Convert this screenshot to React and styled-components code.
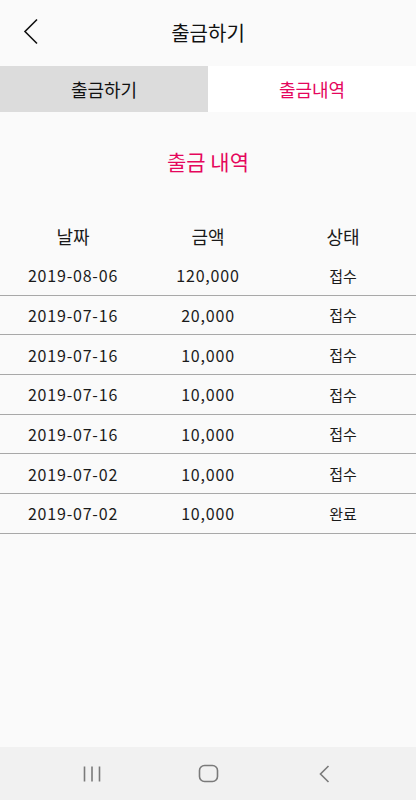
import React from 'react';
import styled, { createGlobalStyle } from 'styled-components';

const GlobalStyle = createGlobalStyle`
  html, body {
    margin: 0;
    padding: 0;
    background: #fafafa;
  }
  body {
    font-family: 'Noto Sans CJK KR', 'Noto Sans', sans-serif;
  }
`

const Screen = styled.div`
  display: flex;
  flex-direction: column;
  width: 416px;
  height: 800px;
  background: #fafafa;
  color: #111111;
`

const Header = styled.header`
  position: relative;
  display: flex;
  align-items: center;
  justify-content: center;
  height: 66px;
`

const BackButton = styled.button`
  position: absolute;
  left: 16px;
  top: 14px;
  width: 30px;
  height: 36px;
  padding: 0;
  border: 0;
  background: none;
  display: flex;
  align-items: center;
  justify-content: center;
`

const Title = styled.h1`
  margin: 0;
  font-size: 20px;
  font-weight: 400;
  line-height: 1;
`

const Tabs = styled.div`
  display: grid;
  grid-template-columns: 1fr 1fr;
  height: 46px;
`

const Tab = styled.div`
  display: flex;
  align-items: center;
  justify-content: center;
  font-size: 18px;
  background: ${props => props.active ? '#ffffff' : '#dcdcdc'};
  color: ${props => props.active ? '#e5065c' : '#111111'};
`

const Body = styled.main`
  flex: 1;
  display: flex;
  flex-direction: column;
`

const SectionTitle = styled.h2`
  margin: 0;
  padding-top: 34px;
  height: 30px;
  line-height: 30px;
  text-align: center;
  font-size: 21px;
  font-weight: 400;
  color: #e5065c;
`

const Table = styled.div`
  margin-top: 40px;
`

const Row = styled.div`
  display: grid;
  grid-template-columns: 146px 124px 146px;
  align-items: center;
  box-sizing: border-box;
  height: ${props => props.head ? '40px' : '39.67px'};
  border-bottom: ${props => props.head ? 'none' : '1px solid #a8a8a8'};
`

const Cell = styled.div`
  text-align: center;
  font-size: ${props => props.head ? '18px' : props.num ? '16px' : '15px'};
  color: #1a1a1a;
  letter-spacing: ${props => props.num ? '0.8px' : '0'};
`

const NavBar = styled.nav`
  display: flex;
  align-items: center;
  justify-content: center;
  gap: 76px;
  height: 53px;
  background: #f1f1f1;
`

const NavIcon = styled.div`
  display: flex;
  align-items: center;
  justify-content: center;
  width: 40px;
  height: 40px;
`

const rows = [
  ['2019-08-06', '120,000', '접수'],
  ['2019-07-16', '20,000', '접수'],
  ['2019-07-16', '10,000', '접수'],
  ['2019-07-16', '10,000', '접수'],
  ['2019-07-16', '10,000', '접수'],
  ['2019-07-02', '10,000', '접수'],
  ['2019-07-02', '10,000', '완료'],
];

export default function App() {
  return (
    <Screen>
      <GlobalStyle />
      <Header>
        <BackButton type="button" aria-label="back">
          <svg width="18" height="28" viewBox="0 0 18 28">
            <path d="M15 1.5 L3 13.5 L15 25.5" fill="none" stroke="#111" strokeWidth="1.6" />
          </svg>
        </BackButton>
        <Title>출금하기</Title>
      </Header>
      <Tabs>
        <Tab>출금하기</Tab>
        <Tab active>출금내역</Tab>
      </Tabs>
      <Body>
        <SectionTitle>출금 내역</SectionTitle>
        <Table>
          <Row head>
            <Cell head>날짜</Cell>
            <Cell head>금액</Cell>
            <Cell head>상태</Cell>
          </Row>
          {rows.map((r, i) => (
            <Row key={i}>
              <Cell num>{r[0]}</Cell>
              <Cell num>{r[1]}</Cell>
              <Cell>{r[2]}</Cell>
            </Row>
          ))}
        </Table>
      </Body>
      <NavBar>
        <NavIcon>
          <svg width="20" height="18" viewBox="0 0 20 18">
            <path d="M2.5 1.5 V16.5 M10 1.5 V16.5 M17.5 1.5 V16.5" stroke="#7a7a7a" strokeWidth="1.6" />
          </svg>
        </NavIcon>
        <NavIcon>
          <svg width="21" height="19" viewBox="0 0 21 19">
            <rect x="1.5" y="1.5" width="18" height="16" rx="5" fill="none" stroke="#7a7a7a" strokeWidth="1.6" />
          </svg>
        </NavIcon>
        <NavIcon>
          <svg width="14" height="20" viewBox="0 0 14 20">
            <path d="M11.5 2 L3.5 10 L11.5 18" fill="none" stroke="#7a7a7a" strokeWidth="1.6" />
          </svg>
        </NavIcon>
      </NavBar>
    </Screen>
  );
}
